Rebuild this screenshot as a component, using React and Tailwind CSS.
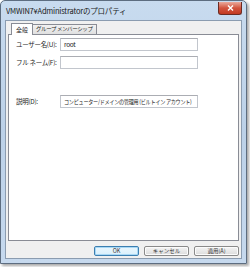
const jp = { fontFamily: '"Noto Sans CJK JP", "Noto Sans", sans-serif' };

function Field({ label, value, className = "" }) {
  return (
    <div className={"flex items-center " + className}>
      <span className="w-[44px] shrink-0 text-[6.5px] tracking-[-0.3px] text-[#1e1e1e]">{label}</span>
      <div className="flex h-[13px] w-[138px] items-center overflow-hidden border border-[#c2c6cd] border-t-[#abadb3] bg-white pl-[3px] text-[6.5px] tracking-[-0.3px] text-[#1e1e1e]">
        {value}
      </div>
    </div>
  );
}

function Btn({ children, primary }) {
  return (
    <div
      className={
        "flex h-[10px] w-[45px] items-center justify-center rounded-[2px] border text-[5.5px] text-[#333] " +
        (primary
          ? "border-[#3c7fb1] bg-gradient-to-b from-[#eaf6fd] to-[#d9f0fc] shadow-[inset_0_0_0_1px_#a8d8f5]"
          : "border-[#8a8a8a] bg-gradient-to-b from-[#f4f4f4] to-[#dcdcdc] shadow-[inset_0_0_0_1px_#fbfbfb]")
      }
    >
      {children}
    </div>
  );
}

export default function App() {
  return (
    <div className="h-[267px] w-[250px] bg-white" style={jp}>
      <div className="flex h-[264px] w-[247px] flex-col rounded-t-[5px] border border-[#5d6d80] bg-gradient-to-b from-[#c8dbef] via-[#bcd1e8] to-[#c6d9ee] shadow-[2px_2px_3px_rgba(0,0,0,0.35)]">
        <div className="flex h-[19px] shrink-0 items-center justify-between pl-[5px] pr-[4px]">
          <span className="mt-[1px] text-[7.5px] tracking-[-0.2px] text-[#1b1b1b]">VMWIN7¥Administratorのプロパティ</span>
          <div className="mb-[4px] flex h-[13px] w-[24px] items-center justify-center rounded-b-[3px] border border-t-0 border-[#6b2b23] bg-gradient-to-b from-[#e9a99c] via-[#d2533e] to-[#c23a20]">
            <svg width="7" height="6" viewBox="0 0 7 6">
              <path d="M1 0.5 L6 5.5 M6 0.5 L1 5.5" stroke="white" strokeWidth="1.4" />
            </svg>
          </div>
        </div>
        <div className="mx-[4px] mb-[4px] flex flex-1 flex-col border border-[#8b9cb0] bg-[#f0f0f0] px-[2px] pt-[2px]">
          <div className="flex items-end pl-[3px]">
            <div className="z-10 -mb-px flex h-[12px] items-center border border-b-0 border-[#898c95] bg-white px-[4px] text-[6px] text-[#1e1e1e]">
              全般
            </div>
            <div className="flex h-[10px] items-center border border-l-0 border-b-0 border-[#898c95] bg-gradient-to-b from-[#f2f2f2] to-[#e0e0e0] px-[3px] text-[5.5px] tracking-[-0.4px] text-[#1e1e1e]">
              グループ メンバーシップ
            </div>
          </div>
          <div className="flex h-[207px] flex-col border border-[#898c95] bg-white pl-[7px] pt-[3px]">
            <Field label="ユーザー名(U):" value="root" />
            <Field label="フル ネーム(F):" value="" className="mt-[5px]" />
            <Field
              label="説明(D):"
              value={
                <span className="inline-block origin-left scale-x-[0.85] whitespace-nowrap text-[6px] tracking-[-0.3px]">
                  コンピューター/ドメインの管理用 (ビルトイン アカウント)
                </span>
              }
              className="mt-[26px]"
            />
          </div>
          <div className="mt-[5px] flex justify-end gap-[5px]">
            <Btn primary>OK</Btn>
            <Btn>キャンセル</Btn>
            <Btn>適用(A)</Btn>
          </div>
        </div>
      </div>
    </div>
  );
}
